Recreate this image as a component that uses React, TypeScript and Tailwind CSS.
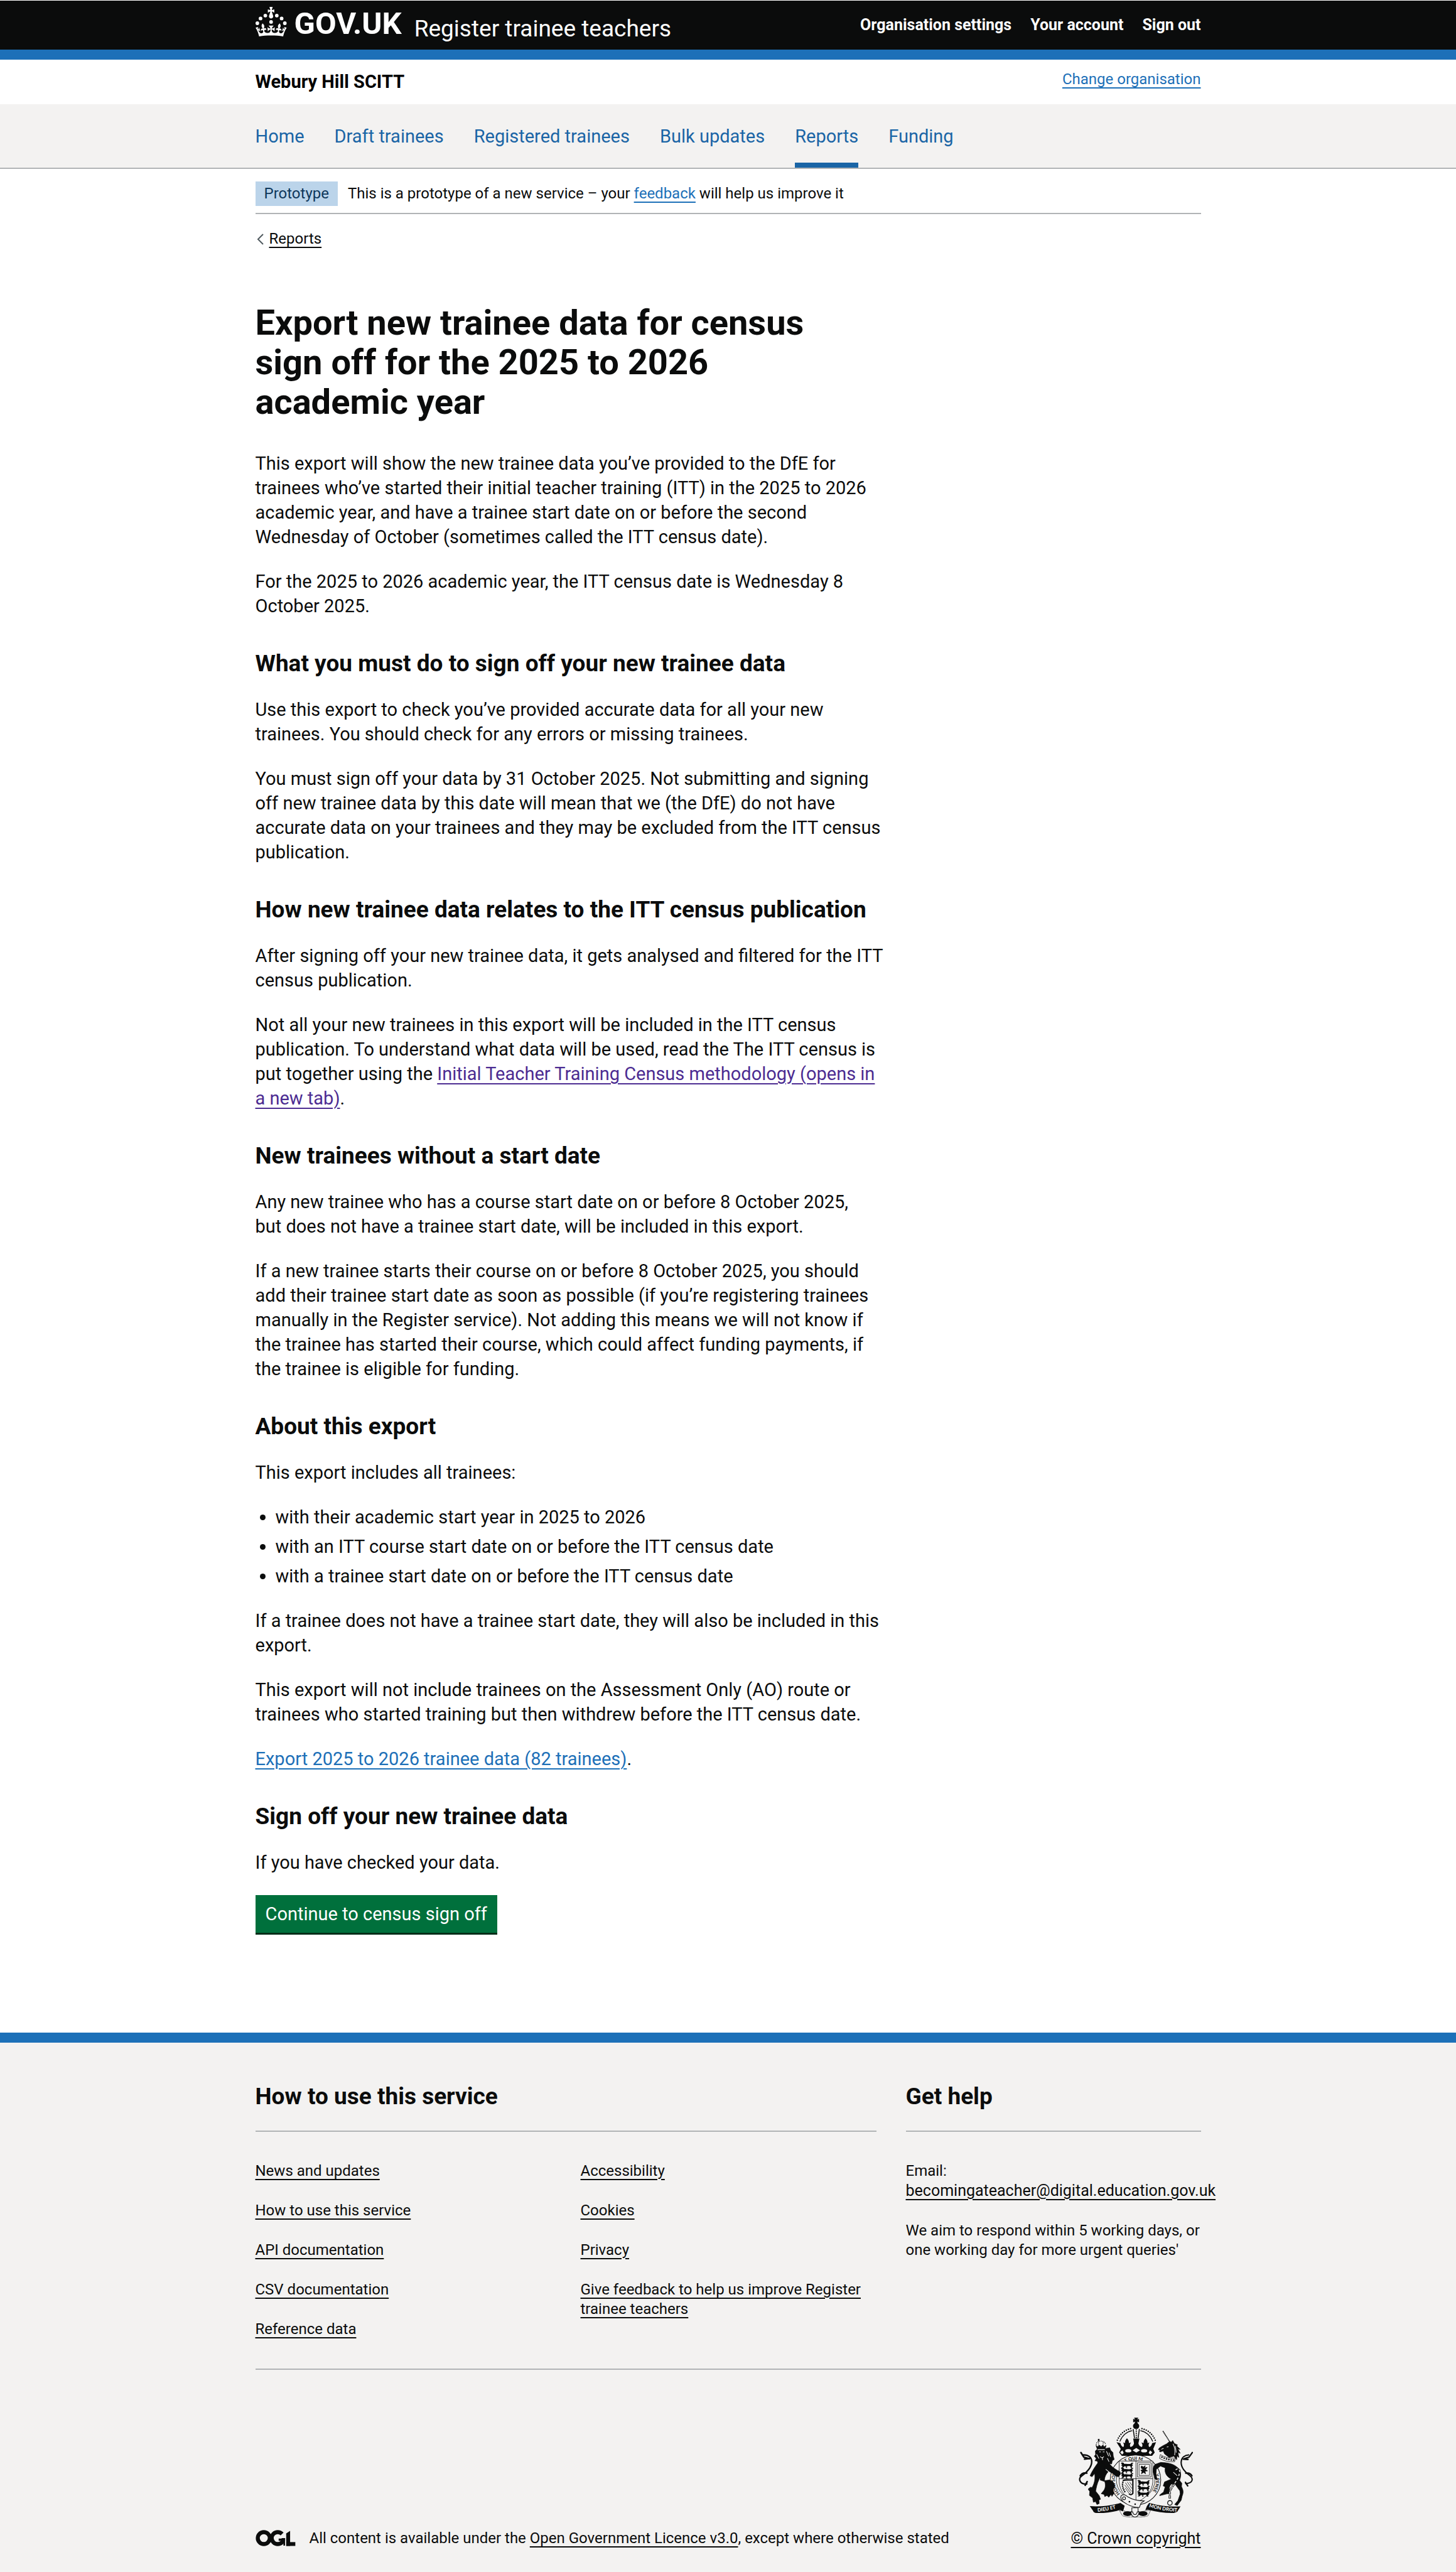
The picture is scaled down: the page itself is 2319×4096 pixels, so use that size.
import type { ReactNode } from "react";

const wrap = "mx-auto w-full max-w-[1506px]";
const footLink = "underline decoration-2 underline-offset-[5px]";

function Crown() {
  return (
    <svg viewBox="0 0 64 60" className="h-[47px] w-[50px] shrink-0" fill="currentColor" aria-hidden="true">
      <circle cx="20" cy="17.6" r="3.7" />
      <circle cx="10.2" cy="23.5" r="3.7" />
      <circle cx="3.7" cy="33.2" r="3.7" />
      <circle cx="31.7" cy="30.6" r="3.7" />
      <circle cx="43.3" cy="17.6" r="3.7" />
      <circle cx="53.2" cy="23.5" r="3.7" />
      <circle cx="59.7" cy="33.2" r="3.7" />
      <path d="M33.1,9.8c.2-.1.3-.3.5-.5l4.6,2.4v-6.8l-4.6,1.5c-.1-.2-.3-.3-.5-.5l1.9-5.9h-6.7l1.9,5.9c-.2.1-.3.3-.5.5l-4.6-1.5v6.8l4.6-2.4c.1.2.3.3.5.5l-2.6,8c-.9,2.8,1.2,5.7,4.1,5.7h0c3,0,5.1-2.9,4.1-5.7l-2.6-8ZM37,37.9s-3.4,3.8-4.1,6.1c2.2,0,4.2-.5,6.4-2.8l-.7,8.5c-2-2.8-4.4-4.1-5.7-3.8.1,3.1.5,6.7,5.8,7.2,3.7.3,6.7-1.5,7-3.8.4-2.6-2-4.3-3.7-1.6-1.4-4.5,2.4-6.1,4.9-3.2-1.9-4.5-1.8-7.7,2.4-10.9,3,4,2.6,7.3-1.2,11.1,2.4-1.3,6.2,0,4,4.6-1.2-2.8-3.7-2.2-4.2.2-.3,1.7.7,3.7,3,4.2,1.9.3,4.7-.9,7-5.9-1.3,0-2.4.7-3.9,1.7l2.4-8c.6,2.3,1.4,3.7,2.2,4.5.6-1.6.5-2.8,0-5.3l5,1.8c-2.6,3.6-5.2,8.7-7.3,17.5-7.4-1.1-15.7-1.7-24.5-1.7h0c-8.8,0-17.1.6-24.5,1.7-2.1-8.9-4.7-13.9-7.3-17.5l5-1.8c-.5,2.5-.6,3.7,0,5.3.8-.8,1.6-2.3,2.2-4.5l2.4,8c-1.5-1-2.6-1.7-3.9-1.7,2.3,5,5.2,6.2,7,5.9,2.3-.4,3.3-2.4,3-4.2-.5-2.4-3-3.1-4.2-.2-2.2-4.6,1.6-6,4-4.6-3.7-3.7-4.2-7.1-1.2-11.1,4.2,3.2,4.3,6.4,2.4,10.9,2.5-2.8,6.3-1.3,4.9,3.2-1.8-2.7-4.1-1-3.7,1.6.3,2.3,3.3,4.1,7,3.8,5.4-.5,5.7-4.2,5.8-7.2-1.3-.2-3.7,1-5.7,3.8l-.7-8.5c2.2,2.3,4.2,2.7,6.4,2.8-.7-2.3-4.1-6.1-4.1-6.1h10.6,0Z" />
    </svg>
  );
}

function LicenceMark() {
  return (
    <svg viewBox="23 68 248 102" className="h-[26px] w-[64px] shrink-0" role="img" aria-label="Open Government Licence">
      <g fill="none" stroke="#0b0c0c">
        <circle cx="73" cy="119" r="37.5" strokeWidth="25" />
        <circle cx="160" cy="119" r="37.5" strokeWidth="25" strokeDasharray="206 40" />
        <line x1="166" y1="129" x2="207" y2="129" strokeWidth="14" />
        <line x1="201" y1="124" x2="201" y2="166" strokeWidth="11" />
        <line x1="225" y1="72" x2="225" y2="168" strokeWidth="25" />
        <line x1="213" y1="156" x2="270" y2="156" strokeWidth="24" />
      </g>
      <line x1="204" y1="85" x2="237" y2="63" stroke="#f3f2f1" strokeWidth="18" />
      <line x1="209" y1="95" x2="209" y2="170" stroke="#f3f2f1" strokeWidth="5" />
    </svg>
  );
}

/* One walking lion of the English quarters. */
function Passant({ x, y }: { x: number; y: number }) {
  return (
    <path
      transform={`translate(${x} ${y})`}
      fill="#0b0c0c"
      stroke="none"
      d="M2 3l9-3 9 3 4 7c12-4 26 3 38-1l8-8 10 4-9 5 5 8-7 8 3 7h-12l4-6-10-6-14 3-2 6 6 4H32l3-8-10-3-8 9H5l8-9-9-5 6-5z"
    />
  );
}

function RoyalArms() {
  return (
    <svg viewBox="20 26 700 614" className="h-[160px] w-[182px]" aria-hidden="true">
      <defs>
        <path id="garter-left" d="M274 492A126 126 0 0 1 279 319" />
        <path id="garter-top" d="M306 301A124 124 0 0 1 460 326" />
        <path id="garter-right" d="M489 372A126 126 0 0 1 420 523" />
        <path id="scroll-left" d="M136 602Q210 596 276 574" />
        <path id="scroll-right" d="M450 573Q530 598 626 602" />
      </defs>

      {/* crown */}
      <g fill="#0b0c0c">
        <path d="M360 26h25l-6 12 11-5v22l-11-5 4 13c8 4 10 14 6 24l-8 8h-18l-8-8c-4-10-2-20 6-24l5-13-12 5V33l11 5z" />
        <path d="M252 176l24 6c2 12 8 22 18 24 6-10 4-18-2-28l12 4c-1-12 4-22 12-30 8 8 13 18 12 30l13-4c-8 10-9 20-3 28 10-2 18-9 21-22l-5-30h38l-6 30c3 13 11 20 21 22 6-8 5-18-3-28l14 4c-1-12 4-22 12-30 8 8 13 18 12 30l12-4c-6 10-8 18-2 28 10-2 16-12 18-24l24-6-17 42 9 22-16 20H284l-16-20 10-22z" />
      </g>
      <g fill="#f3f2f1">
        <ellipse cx="324" cy="229" rx="19" ry="10" />
        <ellipse cx="421" cy="229" rx="19" ry="10" />
        <path d="M350 226l23-14 23 14-23 14zM274 238l14-12 8 16-10 10zM471 238l-14-12-8 16 10 10z" />
      </g>
      <g fill="none" stroke="#0b0c0c">
        <path d="M257 164Q284 101 350 91M489 164Q462 101 396 91" strokeWidth="9" strokeLinecap="round" strokeDasharray="0 14" />
        <path d="M272 172Q296 116 348 106M474 172Q450 116 398 106" strokeWidth="5" />
        <path d="M354 96l8 56M392 96l-8 56" strokeWidth="6" />
        <path d="M373 100v54" strokeWidth="8" strokeLinecap="round" strokeDasharray="0 12" />
      </g>

      {/* tails */}
      <g fill="none" stroke="#0b0c0c" strokeLinecap="round">
        <path d="M70 432C26 436 14 398 40 382C66 366 100 330 100 296C100 268 78 254 50 254" strokeWidth="9" />
        <path d="M34 240l18 28 34 10M56 280l32-4M70 366c-20-4-32 2-40 16M60 440l12-22" strokeWidth="10" />
        <path d="M676 430C722 428 724 398 700 380C672 362 646 330 648 298C650 270 670 256 694 254" strokeWidth="8" />
        <path d="M716 240l-20 28-30 10M690 282l-30-2M676 366c20-4 30 2 38 16M688 444l-14-22" strokeWidth="9" />
      </g>

      {/* garter */}
      <ellipse cx="368" cy="408" rx="155" ry="153" fill="#f3f2f1" stroke="#0b0c0c" strokeWidth="4" />
      <ellipse cx="369" cy="408" rx="118" ry="118" fill="#f3f2f1" stroke="#0b0c0c" strokeWidth="3" />
      <g fill="#0b0c0c" fontFamily="Lato, sans-serif" fontWeight="700" fontSize="28">
        <text><textPath href="#garter-left">HONI SOI</textPath></text>
        <text><textPath href="#garter-top">T QUI M</textPath></text>
        <text><textPath href="#garter-right">Y PENSE</textPath></text>
      </g>

      {/* shield */}
      <path d="M268 292H474V420C470 480 430 520 371 548C312 520 272 480 268 420Z" fill="#f3f2f1" stroke="#0b0c0c" strokeWidth="3" />
      <Passant x={276} y={300} />
      <Passant x={276} y={332} />
      <Passant x={276} y={364} />
      <Passant x={378} y={408} />
      <Passant x={378} y={442} />
      <Passant x={376} y={476} />
      <g fill="none" stroke="#0b0c0c" strokeWidth="3">
        <path d="M371 292v250M268 400h206" />
        <path d="M380 302h84v88h-84zM390 312h64v68h-64z" />
        <path d="M404 322l14 6 10-8-4 14 16-4-10 14 12 8-16 2 4 16-12-8-14 8 4-14-8-8 14-4-12-10z" fill="#0b0c0c" />
        <path d="M290 412c20-10 50 0 62-6v84c-6 10-16 10-24 2" strokeWidth="8" />
        <path d="M292 418c-8 22 0 48 14 66" strokeWidth="9" strokeDasharray="8 4" />
        <path d="M306 424l38 54M318 420l28 40M302 438l38 50M304 456l24 32M332 420l14 20" />
      </g>

      {/* lion */}
      <g fill="#0b0c0c" stroke="#0b0c0c" strokeWidth="3" strokeLinejoin="round">
        <path d="M126 196l8 24h48l6-24-12 8-8-10-10 10-12-10-8 10z" />
        <path d="M139 158h8l-2 10h-5z" />
        <path d="M122 230l16-14h44l28-6 6 16 14 14 2 22 6 20-12 8-4 20-12-2-8 20-16-26-20 16-16-14-8 12-8-24-14-2 8-14-12-14 8-10z" />
        <path d="M168 306c16-4 34-4 44 6 14 18 34 32 62 46l2 14-12 16-18-4-10-12-32-18c-18 18-26 38-26 58l30-4c22 8 34 18 32 44l-8 12c0 10-2 16 6 22l-14 22-6-12-14 18-10-12-14 8-4-14-18-4 16-20c10-14 12-34 6-54l-34-12c-14 22-18 50-22 70l22 28 8 22-10 4 2 22-14 6-8-18-14 4-4-26-20-16 2-24-10-14 14-12 10 2c18-30 20-60 16-86l-16 20-12-6c10-24 34-64 62-96z" />
      </g>
      <g fill="none" stroke="#0b0c0c">
        <path d="M128 192c-4-26 50-34 58 0" strokeWidth="5" strokeDasharray="5 5" />
        <path d="M142 166v30M170 174v22" strokeWidth="4" strokeDasharray="5 4" />
      </g>
      <g fill="none" stroke="#f3f2f1" strokeWidth="4">
        <path d="M136 222h44M146 236h10M168 236h10M152 264q12 16 22 0M166 268v18M190 232l14 30M130 250l14 26M206 240l10 26M196 274l10 22" />
        <path d="M186 342l24 20M150 400l-10 30" />
      </g>

      {/* unicorn */}
      <path d="M536 108l42 66" stroke="#0b0c0c" strokeWidth="6" strokeDasharray="7 2" fill="none" />
      <g fill="#0b0c0c" stroke="#0b0c0c" strokeWidth="3" strokeLinejoin="round">
        <path d="M508 222l6-10 22-14 24-12 16-14 12 4 8-10 10 18 20 10-6 4 22 22-14-2 14 26-14-6 6 32-12-10-2 24-16-22-30 8-28-22-8-18-20 6-4-6 10-6z" />
        <path d="M522 300c40 2 80 6 108 36 20 22 18 50 8 74l14 18-2 20c10 20 14 34 4 58l-6 26-24 32-16-6 20-24 14-40-2-20-32-44-22 4c-18 26-8 34-10 56l-20 4-40 10 2-6 22-16 10-32-12-6 8-24 42-18c-30-14-42-38-38-66l-28-14-26 20-2 26 6 40-14-8-6-30c-8-20-4-50 10-58z" />
      </g>
      <g fill="none" stroke="#f3f2f1" strokeWidth="4">
        <path d="M560 206l10-2M540 214l-14 6M598 186q16 30 10 70M612 200l6 40M548 336l-22-6M600 360l24 22" />
      </g>
      <path d="M520 252q38 26 92 22l-4 22q-50 4-92-20z" fill="#f3f2f1" stroke="#0b0c0c" strokeWidth="3" />
      <path d="M526 266q38 20 80 20" fill="none" stroke="#0b0c0c" strokeWidth="9" strokeDasharray="9 6" />
      <g fill="none">
        <path d="M612 348c20-20 32 0 24 22c-4 40-52 80-58 110v44" stroke="#0b0c0c" strokeWidth="13" strokeDasharray="20 5" />
        <path d="M612 348c20-20 32 0 24 22c-4 40-52 80-58 110v44" stroke="#f3f2f1" strokeWidth="6" strokeDasharray="14 11" strokeDashoffset="-3" />
        <circle cx="579" cy="548" r="14" stroke="#0b0c0c" strokeWidth="5" />
      </g>

      {/* belt and scrolls */}
      <path d="M270 596q34 0 40 6l30 2 62-2 38-6 22-4-18 36q-26 8-56 6h-42q-40 2-58-8z" fill="#f3f2f1" stroke="#0b0c0c" strokeWidth="3" strokeDasharray="6 3" />
      <ellipse cx="320" cy="614" rx="28" ry="15" fill="#0b0c0c" />
      <ellipse cx="414" cy="614" rx="28" ry="15" fill="#0b0c0c" />
      <g fill="#f3f2f1" stroke="#0b0c0c" strokeWidth="4">
        <path d="M280 504c20-12 30-2 42 8 28 16 52 24 100 24l-20 14-10 26c-40 0-72-14-100-36-10-10-18-22-12-36z" />
        <path d="M346 578h38v34c0 26-38 26-38 0z" />
        <path d="M340 602c0 44 50 44 50 0l-12 2c0 20-26 20-26 0z" />
        <circle cx="298" cy="520" r="9" />
      </g>
      <g fill="#0b0c0c">
        <circle cx="331" cy="541" r="5" />
        <circle cx="366" cy="556" r="5" />
        <path d="M88 568q100 6 188-20l26 18-10 34-18-8q-70 20-146 18-16-2-20-14z" />
        <path d="M644 570q-100 4-192-22l-14 20-10 26 16-4q84 22 160 20l20-8z" />
      </g>
      <g fill="#f3f2f1" fontFamily="Lato, sans-serif" fontWeight="900" fontSize="30">
        <text><textPath href="#scroll-left">DIEU ET</textPath></text>
        <text><textPath href="#scroll-right">MON DROIT</textPath></text>
      </g>
    </svg>
  );
}

function H2({ children }: { children: ReactNode }) {
  return <h2 className="mb-[31px] pt-4 text-[37px] leading-[47px] font-bold">{children}</h2>;
}

function P({ children }: { children: ReactNode }) {
  return <p className="mb-8">{children}</p>;
}

const accountLinks = ["Organisation settings", "Your account", "Sign out"];
const navItems = ["Home", "Draft trainees", "Registered trainees", "Bulk updates", "Reports", "Funding"];
const helpLinks = ["News and updates", "How to use this service", "API documentation", "CSV documentation", "Reference data"];
const policyLinks = ["Accessibility", "Cookies", "Privacy", "Give feedback to help us improve Register trainee teachers"];

function LinkList({ items }: { items: string[] }) {
  return (
    <ul className="flex flex-col gap-8">
      {items.map((item) => (
        <li key={item}>
          <a href="#" className={footLink}>{item}</a>
        </li>
      ))}
    </ul>
  );
}

export default function App() {
  return (
    <div className="bg-white font-[Roboto,sans-serif] text-[29px] leading-[39px] text-[#0b0c0c]">
      <header>
        <div className="border-t border-b-16 border-t-white border-b-[#1d70b8] bg-[#0b0c0c] text-white">
          <div className={`${wrap} flex h-[78px] items-start justify-between`}>
            <div className="flex items-baseline gap-5 pt-2.5">
              <a href="#" className="flex items-start gap-3">
                <Crown />
                <span className="text-[49px] leading-[53px] font-bold">GOV.UK</span>
              </a>
              <a href="#" className="text-[37px]">Register trainee teachers</a>
            </div>
            <ul className="flex gap-[30px] pt-[23px] text-[25px] leading-[31px] font-bold">
              {accountLinks.map((item) => (
                <li key={item}>
                  <a href="#">{item}</a>
                </li>
              ))}
            </ul>
          </div>
        </div>
        <div className={`${wrap} flex items-start justify-between py-4`}>
          <p className="font-bold text-black">Webury Hill SCITT</p>
          <a href="#" className="text-[24px] leading-[31px] text-[#1d70b8] underline decoration-2 underline-offset-[5px]">
            Change organisation
          </a>
        </div>
        <nav aria-label="Primary" className="border-b-2 border-[#b1b4b6] bg-[#f3f2f1]">
          <ul className={`${wrap} flex gap-12 text-[#1a65a6]`}>
            {navItems.map((item) => (
              <li key={item}>
                <a
                  href="#"
                  aria-current={item === "Reports" ? "page" : undefined}
                  className="block border-b-8 border-transparent pt-8 pb-[22px] aria-[current=page]:border-[#1a65a6]"
                >
                  {item}
                </a>
              </li>
            ))}
          </ul>
        </nav>
      </header>

      <div className={`${wrap} text-[24px] leading-[31px]`}>
        <div className="flex items-center gap-4 border-b-2 border-[#b1b4b6] pt-5 pb-[11px]">
          <strong className="bg-[#bbd4ea] px-[14px] py-1 font-normal text-[#0f385c]">Prototype</strong>
          <p>
            This is a prototype of a new service – your{" "}
            <a href="#" className="text-[#1d70b8] underline decoration-2 underline-offset-[5px]">feedback</a> will help us improve it
          </p>
        </div>
        <a href="#" className="mt-6 inline-flex items-center gap-[9px]">
          <svg viewBox="0 0 13 18" className="h-[18px] w-[13px]" fill="none" stroke="#505a5f" strokeWidth="2" aria-hidden="true">
            <path d="M12 1L4 9l8 8" />
          </svg>
          <span className={footLink}>Reports</span>
        </a>
      </div>

      <main className={`${wrap} pt-[85px] pb-[156px]`}>
        <div className="max-w-[1006px]">
          <h1 className="mb-[47px] max-w-[960px] text-[56px] leading-[63px] font-bold">
            Export new trainee data for census sign off for the 2025 to 2026 academic year
          </h1>
          <P>
            This export will show the new trainee data you’ve provided to the DfE for trainees who’ve started their initial
            teacher training (ITT) in the 2025 to 2026 academic year, and have a trainee start date on or before the second
            Wednesday of October (sometimes called the ITT census date).
          </P>
          <P>For the 2025 to 2026 academic year, the ITT census date is Wednesday 8 October 2025.</P>

          <H2>What you must do to sign off your new trainee data</H2>
          <P>
            Use this export to check you’ve provided accurate data for all your new
            <br />
            trainees. You should check for any errors or missing trainees.
          </P>
          <P>
            You must sign off your data by 31 October 2025. Not submitting and signing off new trainee data by this date will
            mean that we (the DfE) do not have accurate data on your trainees and they may be excluded from the ITT census
            publication.
          </P>

          <H2>How new trainee data relates to the ITT census publication</H2>
          <P>After signing off your new trainee data, it gets analysed and filtered for the ITT census publication.</P>
          <P>
            Not all your new trainees in this export will be included in the ITT census publication. To understand what data
            will be used, read the The ITT census is put together using the{" "}
            <a href="#" className="text-[#4c2c92] underline decoration-2 underline-offset-[5px]">
              Initial Teacher Training Census methodology (opens in
              <br />a new tab)
            </a>
            .
          </P>

          <H2>New trainees without a start date</H2>
          <P>
            Any new trainee who has a course start date on or before 8 October 2025,
            <br />
            but does not have a trainee start date, will be included in this export.
          </P>
          <P>
            If a new trainee starts their course on or before 8 October 2025, you should
            <br />
            add their trainee start date as soon as possible (if you’re registering trainees manually in the Register service).
            Not adding this means we will not know if the trainee has started their course, which could affect funding
            payments, if the trainee is eligible for funding.
          </P>

          <H2>About this export</H2>
          <P>This export includes all trainees:</P>
          <ul className="mb-8 flex list-disc flex-col gap-2 pl-8">
            <li>with their academic start year in 2025 to 2026</li>
            <li>with an ITT course start date on or before the ITT census date</li>
            <li>with a trainee start date on or before the ITT census date</li>
          </ul>
          <P>If a trainee does not have a trainee start date, they will also be included in this export.</P>
          <P>
            This export will not include trainees on the Assessment Only (AO) route or trainees who started training but then
            withdrew before the ITT census date.
          </P>
          <P>
            <a href="#" className="text-[#1d70b8] underline decoration-2 underline-offset-[5px]">
              Export 2025 to 2026 trainee data (82 trainees)
            </a>
            .
          </P>

          <H2>Sign off your new trainee data</H2>
          <P>If you have checked your data.</P>
          <button type="button" className="block border-b-3 border-[#002d18] bg-[#00703c] px-4 pt-[11px] pb-[10px] text-white">
            Continue to census sign off
          </button>
        </div>
      </main>

      <footer className="border-t-16 border-[#1d70b8] bg-[#f3f2f1] pt-[62px] pb-[38px] text-[24px] leading-[31px]">
        <div className={wrap}>
          <div className="grid grid-cols-[989fr_470fr] gap-x-[47px] border-b-2 border-[#b1b4b6] pb-[47px]">
            <section>
              <h2 className="mb-[47px] border-b-2 border-[#b1b4b6] pb-[31px] text-[37px] leading-[47px] font-bold">
                How to use this service
              </h2>
              <div className="grid grid-cols-2 gap-x-[47px]">
                <LinkList items={helpLinks} />
                <LinkList items={policyLinks} />
              </div>
            </section>
            <section className="min-w-0">
              <h2 className="mb-[47px] border-b-2 border-[#b1b4b6] pb-[31px] text-[37px] leading-[47px] font-bold">Get help</h2>
              <p className="mb-8">
                Email:
                <br />
                <a href="mailto:becomingateacher@digital.education.gov.uk" className="text-[25px] underline decoration-2 underline-offset-[5px]">
                  becomingateacher@digital.education.gov.uk
                </a>
              </p>
              <p className="whitespace-nowrap">
                We aim to respond within 5 working days, or
                <br />
                one working day for more urgent queries'
              </p>
            </section>
          </div>
          <div className="flex items-end justify-between pt-[76px]">
            <div className="flex items-center gap-[22px]">
              <LicenceMark />
              <p>
                All content is available under the{" "}
                <a href="#" className={footLink}>Open Government Licence v3.0</a>, except where otherwise stated
              </p>
            </div>
            <a href="#" className="flex flex-col items-center gap-[17px]">
              <RoyalArms />
              <span className="text-[25px] underline decoration-2 underline-offset-[5px]">© Crown copyright</span>
            </a>
          </div>
        </div>
      </footer>
    </div>
  );
}
